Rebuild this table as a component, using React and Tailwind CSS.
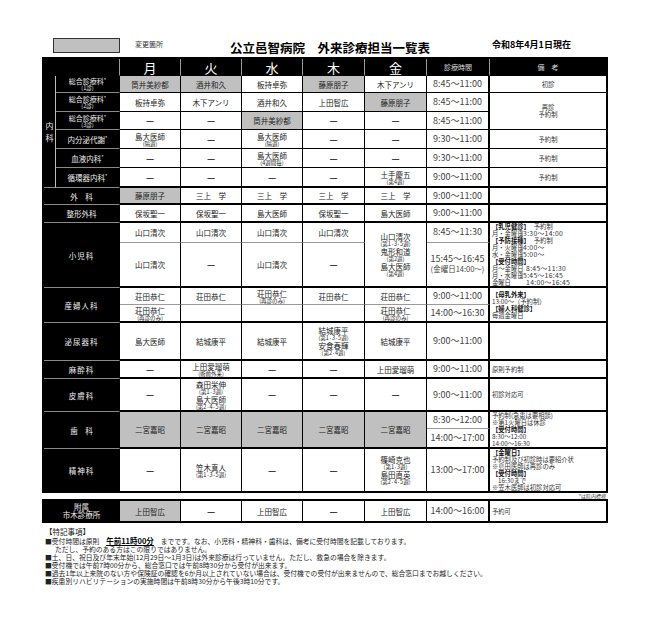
import React from 'react'
import clsx from 'clsx'

const cell = 'p-0 text-center align-middle border-r border-b border-black'
const hd = 'p-0 bg-black text-center align-middle font-normal border-r border-r-[#9a9a9a] border-b border-b-black leading-none'

function Td({ g, rs, cs, tb, lt, end, children }) {
  return (
    <td
      rowSpan={rs}
      colSpan={cs}
      className={clsx(
        cell,
        'text-[#222] text-[7.5px] leading-[9px]',
        g && 'bg-[#c0c0c0]',
        tb && 'border-b-2',
        lt && 'border-b-[#9a9a9a]',
        end && 'border-b-0'
      )}
    >
      {children}
    </td>
  )
}

function Nm({ n, s }) {
  return (
    <div className="flex flex-col items-center">
      <span className="text-[7.5px] leading-[9px] whitespace-nowrap">{n}</span>
      {s && <span className="text-[5.5px] leading-[6px] whitespace-nowrap">{s}</span>}
    </div>
  )
}

const Dash = () => <div className="text-[9px] leading-[9px] font-bold text-[#333]">—</div>

function Tm({ rs, tb, lt, end, children }) {
  return (
    <td
      rowSpan={rs}
      className={clsx(
        cell,
        'border-r-2 text-[9px] leading-[10px] text-[#444] whitespace-nowrap',
        tb && 'border-b-2',
        lt && 'border-b-[#9a9a9a]',
        end && 'border-b-0'
      )}
    >
      {children}
    </td>
  )
}

function Nt({ rs, tb, end, left, children }) {
  return (
    <td
      rowSpan={rs}
      className={clsx(
        cell,
        'border-r-0 text-[6.3px] leading-[7px] text-[#333]',
        left ? 'text-left pl-[2px]' : 'text-center',
        tb && 'border-b-2',
        end && 'border-b-0'
      )}
    >
      {children}
    </td>
  )
}

function Dp({ rs, cs, end, sp, two, children }) {
  return (
    <td
      rowSpan={rs}
      colSpan={cs}
      className={clsx(
        'p-0 bg-black text-[#eee] text-center align-middle border-b border-b-[#8a8a8a] border-r border-r-black text-[7.5px] whitespace-nowrap',
        two ? 'leading-[8px]' : 'leading-[9px]',
        sp && 'tracking-[1px]',
        end && 'border-b-0'
      )}
    >
      {children}
    </td>
  )
}

function Sg({ n }) {
  return (
    <div className="flex flex-col items-center">
      <span className="text-[7px] leading-[8px]">
        総合診療科<span className="text-[5px] leading-none align-top">*</span>
      </span>
      <span className="text-[5.5px] leading-[6px]">({n}診)</span>
    </div>
  )
}

function Star({ n }) {
  return (
    <span>
      {n}
      <span className="text-[5px] leading-none align-top">*</span>
    </span>
  )
}

const B = ({ children }) => <div className="font-bold text-[#111]">{children}</div>

function Line({ l, t }) {
  return (
    <div className="flex whitespace-nowrap">
      <span className="w-[27px]">{l}</span>
      <span className="text-[6.8px] tracking-[0.3px]">{t}</span>
    </div>
  )
}

function Cols() {
  return (
    <colgroup>
      <col className="w-[12px]" />
      <col className="w-[64px]" />
      <col className="w-[61px]" />
      <col className="w-[61px]" />
      <col className="w-[61px]" />
      <col className="w-[62px]" />
      <col className="w-[62px]" />
      <col className="w-[63px]" />
      <col className="w-[116px]" />
    </colgroup>
  )
}

export default function App() {
  return (
    <div className="w-[650px] h-[628px] bg-white font-['Noto_Sans_CJK_JP',sans-serif]">
      <div className="ml-[42px] w-[566px]">
        {/* top */}
        <div className="flex items-start h-[57px] pt-[38px]">
          <div className="w-[188px] flex items-start">
            <div className="ml-[11px] w-[67px] h-[15px] bg-[#c0c0c0] border border-[#333]" />
            <span className="ml-[15px] mt-[1px] text-[7px] leading-[10px] text-[#333]">変更箇所</span>
          </div>
          <div className="w-[210px] mt-[2px] text-[12.5px] leading-[15px] font-bold text-black whitespace-nowrap">
            公立邑智病院　外来診療担当一覧表
          </div>
          <div className="ml-[52px] mt-[1px] text-[9px] leading-[12px] font-bold text-black whitespace-nowrap">
            令和8年4月1日現在
          </div>
        </div>

        {/* main table */}
        <div className="border-2 border-black">
          <table className="w-full table-fixed border-separate border-spacing-0">
            <Cols />
            <thead>
              <tr className="h-[17px]">
                <th colSpan={2} className={hd}></th>
                {['月', '火', '水', '木', '金'].map((d) => (
                  <th key={d} className={clsx(hd, 'text-white text-[13px] font-bold')}>
                    {d}
                  </th>
                ))}
                <th className={clsx(hd, 'text-[#ddd] text-[7px]')}>診療時間</th>
                <th className={clsx(hd, 'text-[#ddd] text-[7px] border-r-0')}>備　考</th>
              </tr>
            </thead>
            <tbody>
              <tr className="h-[17px]">
                <td
                  rowSpan={6}
                  className="p-0 bg-black text-[#eee] text-[8px] leading-[12px] text-center align-middle border-r border-r-[#bbbbbb] border-b border-b-[#8a8a8a]"
                >
                  内<br />科
                </td>
                <Dp><Sg n="1" /></Dp>
                <Td g><Nm n="筒井美紗都" /></Td>
                <Td g><Nm n="酒井和久" /></Td>
                <Td><Nm n="板持卓弥" /></Td>
                <Td g><Nm n="藤原朋子" /></Td>
                <Td><Nm n="木下アンリ" /></Td>
                <Tm>8:45～11:00</Tm>
                <Nt>初診</Nt>
              </tr>
              <tr className="h-[19px]">
                <Dp><Sg n="2" /></Dp>
                <Td><Nm n="板持卓弥" /></Td>
                <Td><Nm n="木下アンリ" /></Td>
                <Td><Nm n="酒井和久" /></Td>
                <Td><Nm n="上田智広" /></Td>
                <Td g><Nm n="藤原朋子" /></Td>
                <Tm>8:45～11:00</Tm>
                <Nt rs={2}>再診<br />予約制</Nt>
              </tr>
              <tr className="h-[18px]">
                <Dp><Sg n="3" /></Dp>
                <Td><Dash /></Td>
                <Td><Dash /></Td>
                <Td g><Nm n="筒井美紗都" /></Td>
                <Td><Dash /></Td>
                <Td><Dash /></Td>
                <Tm>8:45～11:00</Tm>
              </tr>
              <tr className="h-[19px]">
                <Dp><Star n="内分泌代謝" /></Dp>
                <Td><Nm n="島大医師" s="(隔週)" /></Td>
                <Td><Dash /></Td>
                <Td><Nm n="島大医師" s="(隔週)" /></Td>
                <Td><Dash /></Td>
                <Td><Dash /></Td>
                <Tm>9:30～11:00</Tm>
                <Nt>予約制</Nt>
              </tr>
              <tr className="h-[19px]">
                <Dp><Star n="血液内科" /></Dp>
                <Td><Dash /></Td>
                <Td><Dash /></Td>
                <Td><Nm n="島大医師" s="(4週間毎)" /></Td>
                <Td><Dash /></Td>
                <Td><Dash /></Td>
                <Tm>9:30～11:00</Tm>
                <Nt>予約制</Nt>
              </tr>
              <tr className="h-[20px]">
                <Dp><Star n="循環器内科" /></Dp>
                <Td tb><Dash /></Td>
                <Td tb><Dash /></Td>
                <Td tb><Dash /></Td>
                <Td tb><Dash /></Td>
                <Td tb><Nm n="土手慶五" s="(第4週)" /></Td>
                <Tm tb>9:00～11:00</Tm>
                <Nt tb>予約制</Nt>
              </tr>
              <tr className="h-[17px]">
                <Dp cs={2}>外　科</Dp>
                <Td tb g><Nm n="藤原朋子" /></Td>
                <Td tb><Nm n="三上　学" /></Td>
                <Td tb><Nm n="三上　学" /></Td>
                <Td tb><Nm n="三上　学" /></Td>
                <Td tb><Nm n="三上　学" /></Td>
                <Tm tb>9:00～11:00</Tm>
                <Nt tb />
              </tr>
              <tr className="h-[18px]">
                <Dp cs={2}>整形外科</Dp>
                <Td tb><Nm n="保坂聖一" /></Td>
                <Td tb><Nm n="保坂聖一" /></Td>
                <Td tb><Nm n="島大医師" /></Td>
                <Td tb><Nm n="保坂聖一" /></Td>
                <Td tb><Nm n="島大医師" /></Td>
                <Tm tb>9:00～11:00</Tm>
                <Nt tb />
              </tr>
              <tr className="h-[19px]">
                <Dp cs={2} rs={2} sp>小児科</Dp>
                <Td lt><Nm n="山口清次" /></Td>
                <Td lt><Nm n="山口清次" /></Td>
                <Td lt><Nm n="山口清次" /></Td>
                <Td lt><Nm n="山口清次" /></Td>
                <Td rs={2} tb>
                  <Nm n="山口清次" s="(第1·3·5週)" />
                  <Nm n="鬼形和道" s="(第2週)" />
                  <Nm n="島大医師" s="(第4週)" />
                </Td>
                <Tm lt>8:45～11:30</Tm>
                <Nt rs={2} tb left>
                  <div className="flex whitespace-nowrap">
                    <span className="font-bold text-[#111]">【乳児健診】</span>
                    <span className="ml-[4px]">予約制</span>
                  </div>
                  <Line l="月・金曜日" t="13:30～14:00" />
                  <div className="flex whitespace-nowrap">
                    <span className="font-bold text-[#111]">【予防接種】</span>
                    <span className="ml-[4px]">予約制</span>
                  </div>
                  <Line l="月・火曜日" t="14:00～" />
                  <Line l="水・金曜日" t="15:00～" />
                  <B>【受付時間】</B>
                  <Line l="月～金曜日" t="　8:45～11:30" />
                  <Line l="月・水曜日" t="15:45～16:45" />
                  <Line l="金曜日" t="　14:00～16:45" />
                </Nt>
              </tr>
              <tr className="h-[44px]">
                <Td tb><Nm n="山口清次" /></Td>
                <Td tb><Dash /></Td>
                <Td tb><Nm n="山口清次" /></Td>
                <Td tb><Dash /></Td>
                <Tm tb>
                  15:45～16:45
                  <br />
                  <span className="text-[7.5px]">(金曜日14:00～)</span>
                </Tm>
              </tr>
              <tr className="h-[17px]">
                <Dp cs={2} rs={2} sp>産婦人科</Dp>
                <Td lt><Nm n="荘田恭仁" /></Td>
                <Td lt><Nm n="荘田恭仁" /></Td>
                <Td lt><Nm n="荘田恭仁" s="(再診のみ)" /></Td>
                <Td lt><Nm n="荘田恭仁" /></Td>
                <Td lt><Nm n="荘田恭仁" /></Td>
                <Tm lt>9:00～11:00</Tm>
                <Nt rs={2} tb left>
                  <B>【母乳外来】</B>
                  <div>13:00～（予約制）</div>
                  <B>【婦人科健診】</B>
                  <div>毎週金曜日</div>
                </Nt>
              </tr>
              <tr className="h-[18px]">
                <Td tb><Nm n="荘田恭仁" s="(再診のみ)" /></Td>
                <Td tb />
                <Td tb />
                <Td tb />
                <Td tb><Nm n="荘田恭仁" s="(再診のみ)" /></Td>
                <Tm tb>14:00～16:30</Tm>
              </tr>
              <tr className="h-[38px]">
                <Dp cs={2} sp>泌尿器科</Dp>
                <Td tb><Nm n="島大医師" /></Td>
                <Td tb><Nm n="結城康平" /></Td>
                <Td tb><Nm n="結城康平" /></Td>
                <Td tb>
                  <Nm n="結城康平" s="(第1·3·5週)" />
                  <Nm n="安食春輝" s="(第2·4週)" />
                </Td>
                <Td tb><Nm n="結城康平" /></Td>
                <Tm tb>9:00～11:00</Tm>
                <Nt tb />
              </tr>
              <tr className="h-[18px]">
                <Dp cs={2} sp>麻酔科</Dp>
                <Td tb><Dash /></Td>
                <Td tb><Nm n="上田愛瑠萌" s="(術前外来)" /></Td>
                <Td tb><Dash /></Td>
                <Td tb><Dash /></Td>
                <Td tb><Nm n="上田愛瑠萌" /></Td>
                <Tm tb>9:00～11:00</Tm>
                <Nt tb left>原則予約制</Nt>
              </tr>
              <tr className="h-[33px]">
                <Dp cs={2} sp>皮膚科</Dp>
                <Td tb><Dash /></Td>
                <Td tb>
                  <Nm n="森田栄伸" s="(第1·3週)" />
                  <Nm n="島大医師" s="(第2·4·5週)" />
                </Td>
                <Td tb><Dash /></Td>
                <Td tb><Dash /></Td>
                <Td tb><Dash /></Td>
                <Tm tb>9:00～11:00</Tm>
                <Nt tb left>初診対応可</Nt>
              </tr>
              <tr className="h-[17px]">
                <Dp cs={2} rs={2}>歯　科</Dp>
                <Td rs={2} tb g><Nm n="二宮嘉昭" /></Td>
                <Td rs={2} tb g><Nm n="二宮嘉昭" /></Td>
                <Td rs={2} tb g><Nm n="二宮嘉昭" /></Td>
                <Td rs={2} tb g><Nm n="二宮嘉昭" /></Td>
                <Td rs={2} tb g><Nm n="二宮嘉昭" /></Td>
                <Tm lt>8:30～12:00</Tm>
                <Nt rs={2} tb left>
                  <div>予約制(急患は要相談)</div>
                  <div>※第1火曜日は休診</div>
                  <B>【受付時間】</B>
                  <div>8:30～12:00</div>
                  <div>14:00～16:30</div>
                </Nt>
              </tr>
              <tr className="h-[20px]">
                <Tm tb>14:00～17:00</Tm>
              </tr>
              <tr className="h-[42px]">
                <Dp cs={2} end sp>精神科</Dp>
                <Td end><Dash /></Td>
                <Td end><Nm n="笠木真人" s="(第1·3·5週)" /></Td>
                <Td end><Dash /></Td>
                <Td end><Dash /></Td>
                <Td end>
                  <Nm n="篠崎克也" s="(第1·3週)" />
                  <Nm n="島田直英" s="(第2·4·5週)" />
                </Td>
                <Tm end>13:00～17:00</Tm>
                <Nt end left>
                  <B>【金曜日】</B>
                  <div>予約制及び初診時は要紹介状</div>
                  <div>※島田医師は再診のみ</div>
                  <B>【受付時間】</B>
                  <div className="pl-[6px]">16:30まで</div>
                  <div>※笠木医師は初診対応可</div>
                </Nt>
              </tr>
            </tbody>
          </table>
        </div>

        <div className="h-[6px] text-right pr-[2px] text-[5px] leading-[6px] text-[#333]">*は院内標榜</div>

        {/* annex */}
        <div className="border-2 border-black">
          <table className="w-full table-fixed border-separate border-spacing-0">
            <Cols />
            <tbody>
              <tr className="h-[20px]">
                <Dp cs={2} end two>
                  附属
                  <br />
                  市木診療所
                </Dp>
                <Td end g><Nm n="上田智広" /></Td>
                <Td end><Dash /></Td>
                <Td end><Nm n="上田智広" /></Td>
                <Td end><Dash /></Td>
                <Td end><Nm n="上田智広" /></Td>
                <Tm end>14:00～16:00</Tm>
                <Nt end left>予約可</Nt>
              </tr>
            </tbody>
          </table>
        </div>

        {/* notes */}
        <div className="mt-[4px] ml-[3px] text-[6.8px] leading-[8px] text-[#222] whitespace-nowrap">
          <div className="text-[7.5px] leading-[10px]">【特記事項】</div>
          <div>
            {'■受付時間は原則　'}
            <span className="font-bold underline text-[7.5px] text-black">午前11時00分</span>
            {'　までです。なお、小児科・精神科・歯科は、備考に受付時間を記載しております。'}
          </div>
          <div className="pl-[10px]">ただし、予約のある方はこの限りではありません。</div>
          <div>■土、日、祝日及び年末年始(12月29日～1月3日)は外来診療は行っていません。ただし、救急の場合を除きます。</div>
          <div>■受付機では午前7時00分から、総合窓口では午前8時30分から受付が出来ます。</div>
          <div>■過去1年以上来院のない方や保険証の確認を6か月以上されていない場合は、受付機での受付が出来ませんので、総合窓口までお越しください。</div>
          <div>■疾患別リハビリテーションの実施時間は午前8時30分から午後3時10分です。</div>
        </div>
      </div>
    </div>
  )
}
